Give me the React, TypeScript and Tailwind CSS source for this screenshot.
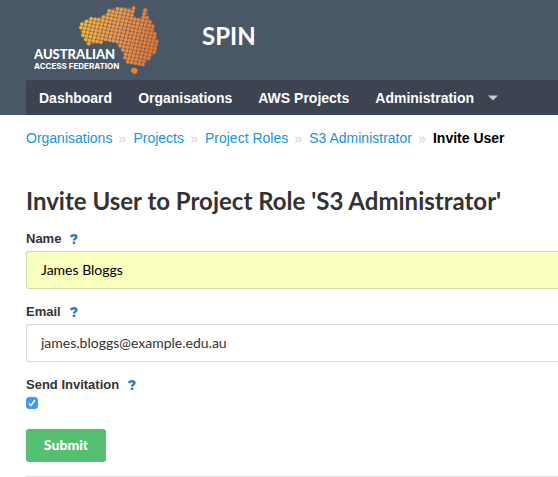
import type { ReactNode } from "react";

type Point = [number, number];

const mainland: Point[] = [
  [54, 19], [66, 17], [73, 13], [76, 9], [84, 7], [101, 8], [98, 13], [103, 18],
  [108, 17], [109, 9], [114, 9], [114, 17], [119, 23], [121, 31], [124, 42],
  [122, 53], [115, 59], [109, 66], [93, 62], [90, 56], [86, 48], [81, 42],
  [73, 40], [66, 43], [53, 45], [49, 37], [46, 30], [48, 22],
];

function inside([x, y]: Point, shape: Point[]) {
  let hit = false;
  for (let i = 0, j = shape.length - 1; i < shape.length; j = i++) {
    const [xi, yi] = shape[i];
    const [xj, yj] = shape[j];
    if (yi > y !== yj > y && x < ((xj - xi) * (y - yi)) / (yj - yi) + xi) hit = !hit;
  }
  return hit;
}

const dots: Point[] = [];
for (let row = -30; row < 60; row++) {
  for (let col = -30; col < 60; col++) {
    const p: Point = [40 + col * 3.8 - row * 0.9, 8 + row * 3.5 + col * 0.7];
    if (inside(p, mainland)) dots.push(p);
  }
}

function Logo() {
  return (
    <svg width="126" height="76" viewBox="0 0 126 76" role="img" aria-label="Australian Access Federation" className="shrink-0">
      <defs>
        <linearGradient id="sunset" gradientUnits="userSpaceOnUse" x1="46" y1="25" x2="124" y2="48">
          <stop offset="0" stopColor="#f9b52e" />
          <stop offset="0.45" stopColor="#ee9548" />
          <stop offset="1" stopColor="#e3742c" />
        </linearGradient>
      </defs>
      <path d={"M" + mainland.map((p) => p.join(" ")).join("L") + "Z"} fill="url(#sunset)" opacity="0.3" />
      <g fill="url(#sunset)">
        {dots.map(([x, y]) => (
          <circle key={x + "," + y} cx={x} cy={y} r="1.8" />
        ))}
        <path d="M97.500 68.500q3-1.500 5.500.5q1.500 2-.5 4.500q-2.500 1-4.500-1q-2-2-.5-4Z" />
      </g>
      <g fill="#fff">
        <text x="0" y="59" fontSize="13" className="font-['Lato',sans-serif] font-black">AUSTRALIAN</text>
        <text x="0" y="69" fontSize="8" className="font-['Inter',sans-serif] font-bold">ACCESS FEDERATION</text>
      </g>
    </svg>
  );
}

function Help() {
  return (
    <svg width="8" height="10" viewBox="0 0 8 10" aria-hidden="true" className="ml-[9px]">
      <path d="M1.200 3.100C1.400 1.800 2.500 1.300 3.800 1.300c1.600 0 2.700.6 2.700 1.800C6.500 4.600 4 4.500 4 6.600" fill="none" stroke="#3280c2" strokeWidth="2.500" />
      <rect x="2.700" y="7.600" width="2.600" height="2.400" fill="#3280c2" />
    </svg>
  );
}

function Label({ htmlFor, children }: { htmlFor: string; children: ReactNode }) {
  return (
    <label htmlFor={htmlFor} className="flex items-center text-[13px] leading-5 font-bold text-[#333]">
      {children}
      <Help />
    </label>
  );
}

const menu = ["Dashboard", "Organisations", "AWS Projects"];
const trail = ["Organisations", "Projects", "Project Roles", "S3 Administrator"];
const field =
  "mt-0.5 block h-[38px] w-full rounded-l-[3px] border border-r-0 px-3.5 pb-0.5 font-['Lato',sans-serif] text-sm outline-none";

export default function App() {
  return (
    <div className="min-h-screen overflow-hidden bg-white font-['Liberation_Sans',Arial,sans-serif]">
      <header className="bg-[#4a5767] pl-[26px]">
        <div className="flex h-20 items-start pl-2">
          <Logo />
          <h1 className="mt-5 ml-[42px] font-['Lato',sans-serif] text-2xl leading-8 font-bold text-white">SPIN</h1>
        </div>
        <nav className="flex h-[35px] items-center rounded-l-[3px] bg-[#3b4450] text-sm font-bold whitespace-nowrap text-white">
          {menu.map((item) => (
            <a key={item} href="#" className="px-[13px]">{item}</a>
          ))}
          <button type="button" className="flex items-center px-[13px]">
            Administration
            <svg width="10" height="6" viewBox="0 0 10 6" aria-hidden="true" className="ml-3.5">
              <path d="M0 .5h10L5 5.500Z" fill="#c9ccd0" />
            </svg>
          </button>
        </nav>
      </header>

      <main className="pl-[26px]">
        <nav aria-label="Breadcrumb" className="flex h-[46px] items-center text-sm whitespace-nowrap">
          {trail.map((item) => (
            <span key={item} className="flex items-center">
              <a href="#" className="text-[#1894d8]">{item}</a>
              <svg width="7" height="7" viewBox="0 0 7 7" aria-hidden="true" className="mx-[7px] mt-0.5">
                <path d="M.5.500l2.500 3-2.500 3M3.500.500l2.500 3-2.500 3" fill="none" stroke="#bfbfbf" />
              </svg>
            </span>
          ))}
          <span className="font-bold text-black">Invite User</span>
        </nav>

        <h2 className="mt-6 font-['Lato',sans-serif] text-2xl leading-8 font-bold whitespace-nowrap text-[#333]">
          Invite User to Project Role 'S3 Administrator'
        </h2>

        <form className="mt-3" onSubmit={(e) => e.preventDefault()}>
          <div className="flex flex-col gap-[13px]">
            <div>
              <Label htmlFor="name">Name</Label>
              <input id="name" type="text" defaultValue="James Bloggs" className={`${field} border-[#d4dba0] bg-[#f9ffbd] text-black`} />
            </div>
            <div>
              <Label htmlFor="email">Email</Label>
              <input id="email" type="email" defaultValue="james.bloggs@example.edu.au" className={`${field} border-[#d9d9d9] bg-white text-[#333]`} />
            </div>
            <div>
              <Label htmlFor="send">Send Invitation</Label>
              <div className="relative mt-0.5 size-3">
                <input id="send" type="checkbox" defaultChecked className="peer block size-3 appearance-none rounded-[3px] border border-[#aaa] checked:border-[#3b99fc] checked:bg-[#3b99fc]" />
                <svg viewBox="0 0 12 12" aria-hidden="true" className="pointer-events-none absolute inset-0 hidden size-3 peer-checked:block">
                  <path d="M3 6.300l2 2.200 4-5.500" fill="none" stroke="#fff" strokeWidth="1.500" />
                </svg>
              </div>
            </div>
          </div>
          <button type="submit" className="mt-5 block h-[33px] w-20 rounded-[3px] bg-[#55bf72] pb-px font-['Lato',sans-serif] text-sm leading-5 font-black text-white">
            Submit
          </button>
        </form>
        <hr className="mt-3.5 border-[#ddd]" />
      </main>
    </div>
  );
}
